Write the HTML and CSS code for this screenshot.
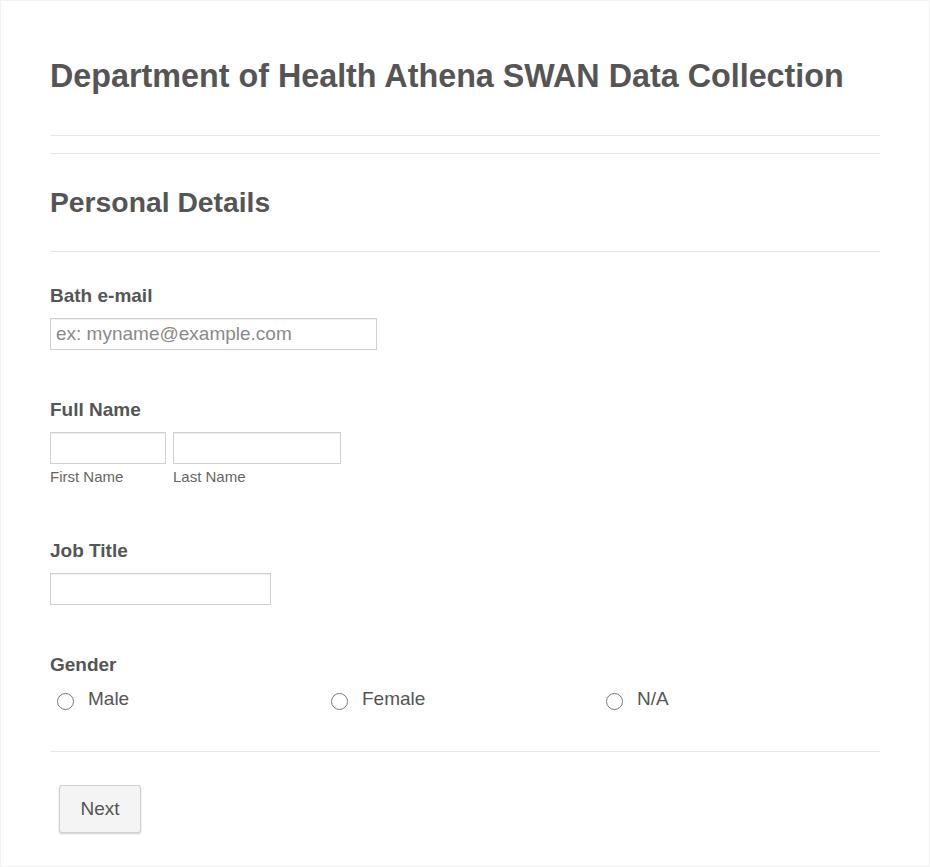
FILE: index.html
```html
<!DOCTYPE html>
<html lang="en">
<head>
<meta charset="UTF-8">
<meta name="viewport" content="width=device-width, initial-scale=1.0">
<title>Department of Health Athena SWAN Data Collection</title>
<link rel="stylesheet" href="styles.css">
</head>
<body>

<form class="form-all">
    <div class="form-header">
        <h1>Department of Health Athena SWAN Data Collection</h1>
    </div>

    <div class="section-header">
        <h2>Personal Details</h2>
    </div>

    <div class="form-line line-email">
        <label class="form-label" for="email">Bath e-mail</label>
        <input type="email" id="email" class="input-email" placeholder="ex: myname@example.com">
    </div>

    <div class="form-line line-name">
        <label class="form-label" for="first">Full Name</label>
        <div class="name-row">
            <div class="name-field">
                <input type="text" id="first" class="input-first">
                <span class="sublabel">First Name</span>
            </div>
            <div class="name-field">
                <input type="text" id="last" class="input-last">
                <span class="sublabel">Last Name</span>
            </div>
        </div>
    </div>

    <div class="form-line line-job">
        <label class="form-label" for="job">Job Title</label>
        <input type="text" id="job" class="input-job">
    </div>

    <div class="form-line line-gender">
        <span class="form-label">Gender</span>
        <div class="radio-row">
            <label class="radio-item"><span class="radio-circle"></span>Male</label>
            <label class="radio-item"><span class="radio-circle"></span>Female</label>
            <label class="radio-item"><span class="radio-circle"></span>N/A</label>
        </div>
    </div>

    <div class="form-buttons">
        <button type="button" class="btn-next">Next</button>
    </div>
</form>

</body>
</html>
```

FILE: styles.css
```css
body {
    margin: 0;
    padding: 0;
    background-color: #fff;
    font-family: "Liberation Sans", Arial, sans-serif;
    color: #555;
}
.form-all {
    box-sizing: border-box;
    width: 930px;
    height: 867px;
    border: 1px solid #f2f2f2;
    padding: 0 49px 0 49px;
}
.form-header {
    padding-top: 56px;
    padding-bottom: 40px;
    border-bottom: 1px solid #e6e6e6;
}
h1 {
    margin: 0;
    font-size: 32.3px;
    line-height: 38px;
    font-weight: bold;
}
.section-header {
    margin-top: 17px;
    border-top: 1px solid #e6e6e6;
    padding-top: 32px;
    padding-bottom: 33px;
    border-bottom: 1px solid #e6e6e6;
}
h2 {
    margin: 0;
    font-size: 28.3px;
    line-height: 32px;
    font-weight: bold;
}
.form-line {
    padding-top: 33px;
}
.form-label {
    display: block;
    font-size: 19px;
    font-weight: bold;
    line-height: 22px;
    margin-bottom: 11px;
}
input[type="email"], input[type="text"] {
    box-sizing: border-box;
    height: 32px;
    border: 1px solid #d0d0d0;
    border-radius: 0;
    box-shadow: inset 0 1px 1px #f0f0f0;
    padding: 0 5px;
    font-family: "Liberation Sans", Arial, sans-serif;
    font-size: 19px;
    color: #555;
    margin: 0;
}
::placeholder {
    color: #8a8a8a;
}
.input-email {
    width: 327px;
    display: block;
}
.line-name {
    padding-top: 49px;
}
.name-row {
    display: flex;
    gap: 7px;
}
.name-field {
    display: flex;
    flex-direction: column;
}
.input-first {
    width: 116px;
}
.input-last {
    width: 168px;
}
.sublabel {
    font-size: 15px;
    color: #666;
    margin-top: 4px;
    line-height: 17px;
}
.input-job {
    width: 221px;
    display: block;
}
.line-job {
    padding-top: 55px;
}
.line-gender {
    padding-top: 49px;
}
.radio-row {
    display: grid;
    grid-template-columns: 274px 275px 1fr;
    padding-left: 7px;
    padding-bottom: 41px;
    border-bottom: 1px solid #e6e6e6;
}
.radio-item {
    display: flex;
    align-items: center;
    font-size: 19px;
    line-height: 22px;
}
.radio-circle {
    box-sizing: border-box;
    width: 17px;
    height: 17px;
    border: 1px solid #777;
    border-radius: 50%;
    margin-right: 14px;
    margin-top: 6px;
}
.form-buttons {
    padding-top: 33px;
    padding-left: 9px;
}
.btn-next {
    width: 82px;
    height: 48px;
    background-color: #f4f4f4;
    border: 1px solid #d0d0d0;
    border-radius: 3px;
    box-shadow: 0 1px 2px rgba(0, 0, 0, 0.2);
    font-family: "Liberation Sans", Arial, sans-serif;
    font-size: 19px;
    color: #555;
    cursor: pointer;
}
```
